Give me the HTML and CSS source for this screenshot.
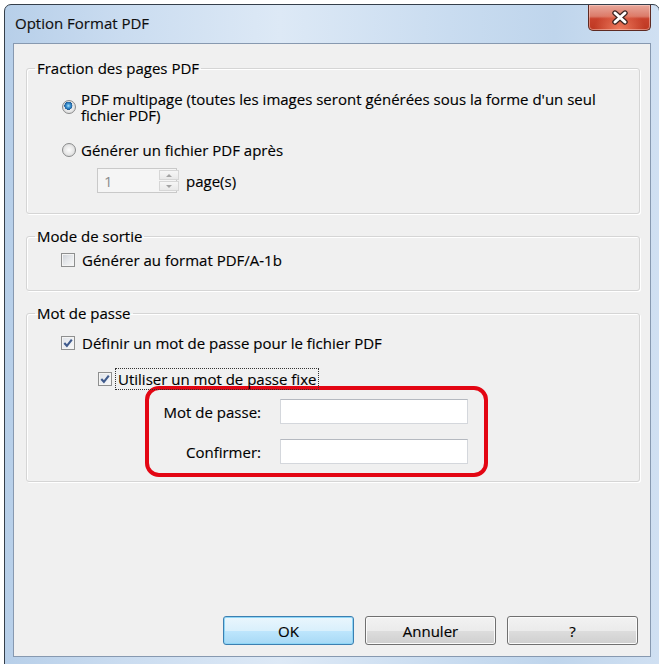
FILE: index.html
```html
<!DOCTYPE html>
<html lang="fr">
  <head>
    <meta charset="UTF-8" />
    <meta name="viewport" content="width=device-width, initial-scale=1.0" />
    <title>Option Format PDF</title>
    <link rel="stylesheet" href="styles.css">
  </head>
  <body>
    <div class="window">
      <div class="titlebar">
        <span class="title">Option Format PDF</span>
        <button type="button" class="close-btn" aria-label="Fermer">
          <svg width="18" height="15" viewBox="0 0 18 15">
            <path d="M4 3 L14 12 M14 3 L4 12" stroke="#3b2320" stroke-width="5.4" stroke-linecap="round" fill="none" />
            <path d="M4 3 L14 12 M14 3 L4 12" stroke="#fff" stroke-width="3" stroke-linecap="round" fill="none" />
          </svg>
        </button>
      </div>

      <div class="client">
        <fieldset class="group group-split">
          <legend>Fraction des pages PDF</legend>
          <div class="group-body">
            <label class="option option-multi">
              <input type="radio" class="radio" name="split" checked />
              <span class="option-text">PDF multipage (toutes les images seront générées sous la forme d'un seul fichier PDF)</span>
            </label>
            <label class="option option-after">
              <input type="radio" class="radio" name="split" />
              <span>Générer un fichier PDF après</span>
            </label>
            <div class="pages-row">
              <div class="spinner">
                <input type="text" class="spinner-input" value="1" disabled />
                <span class="spin-btns">
                  <span class="spin spin-up"></span>
                  <span class="spin spin-down"></span>
                </span>
              </div>
              <span>page(s)</span>
            </div>
          </div>
        </fieldset>

        <fieldset class="group group-mode">
          <legend>Mode de sortie</legend>
          <div class="group-body">
            <label class="option check-row">
              <span class="check"></span>
              <span>Générer au format PDF/A-1b</span>
            </label>
          </div>
        </fieldset>

        <fieldset class="group group-pass">
          <legend>Mot de passe</legend>
          <div class="group-body">
            <label class="option check-row">
              <span class="check checked">
                <svg width="12" height="12" viewBox="0 0 12 12"><path d="M2.3 6 L4.9 8.8 L9.8 2.6" stroke="#3f5a8c" stroke-width="2.1" fill="none" /></svg>
              </span>
              <span>Définir un mot de passe pour le fichier PDF</span>
            </label>
            <label class="option check-row check-fixed">
              <span class="check checked">
                <svg width="12" height="12" viewBox="0 0 12 12"><path d="M2.3 6 L4.9 8.8 L9.8 2.6" stroke="#3f5a8c" stroke-width="2.1" fill="none" /></svg>
              </span>
              <span class="focus-text">Utiliser un mot de passe fixe</span>
            </label>
            <div class="pass-box">
              <span class="pass-label">Mot de passe:</span>
              <input type="password" class="textbox" />
              <span class="pass-label">Confirmer:</span>
              <input type="password" class="textbox" />
            </div>
          </div>
        </fieldset>

        <div class="buttons">
          <button type="button" class="btn btn-default">OK</button>
          <button type="button" class="btn">Annuler</button>
          <button type="button" class="btn">?</button>
        </div>
      </div>
    </div>
  </body>
</html>
```

FILE: styles.css
```css
html,
body {
  margin: 0;
  background: #fff;
  overflow: hidden;
}
body {
  font-family: "Open Sans", "Noto Sans", sans-serif;
  font-size: 15px;
  line-height: 16px;
  color: #000;
  -webkit-text-stroke: 0.15px #000;
}
.window {
  box-sizing: border-box;
  width: 656px;
  height: 661px;
  margin: 4px 0 0 4px;
  padding: 0 8px 7px 8px;
  display: flex;
  flex-direction: column;
  border: 1px solid #353f4b;
  border-radius: 7px 7px 0 0;
  background: linear-gradient(to right, #b7cfe9 0%, #cadcf0 18%, #dde9f6 42%, #c9dcf0 68%, #bfd5ec 84%, #d0e0f2 100%);
}
.titlebar {
  height: 38px;
  display: flex;
  align-items: flex-start;
  flex-shrink: 0;
}
.title {
  margin: 10px 0 0 2px;
  font-size: 15px;
  color: #111;
}
.close-btn {
  margin-left: auto;
  width: 63px;
  height: 26px;
  padding: 0;
  display: flex;
  align-items: center;
  justify-content: center;
  border: 1px solid #5e2a22;
  border-top: none;
  border-radius: 0 0 5px 5px;
  background: radial-gradient(ellipse at 50% 100%, #ef7c5f 0%, rgba(239, 124, 95, 0) 60%),
    linear-gradient(#e9a89b 0%, #db7b6a 45%, #c9412c 55%, #bd3822 100%);
  box-shadow: inset 0 0 0 1px rgba(255, 220, 210, 0.45);
}
.client {
  flex: 1;
  display: flex;
  flex-direction: column;
  border: 1px solid #8799b0;
  background: #f0f0f0;
}
.group {
  margin: 0 10px 0 12px;
  padding: 0 10px 0 8px;
  border: 1px solid #d5d5d5;
  border-radius: 3px;
  box-shadow: inset 1px 1px 0 #fff, 1px 1px 0 #fff;
}
.group legend {
  padding: 0 2px;
  line-height: 16px;
}
.group-body {
  padding-left: 28px;
}
.group-split {
  margin-top: 16px;
  padding-top: 15px;
  padding-bottom: 20px;
}
.group-mode {
  margin-top: 14px;
  padding-top: 8px;
  padding-bottom: 22px;
}
.group-pass {
  margin-top: 14px;
  padding-top: 14px;
  padding-bottom: 4px;
}
.option {
  display: flex;
  align-items: center;
  gap: 5px;
  min-height: 16px;
}
.option-multi {
  min-height: 32px;
}
.option-text {
  max-width: 545px;
}
.option-after {
  margin-top: 19px;
}
.radio {
  appearance: none;
  flex-shrink: 0;
  width: 14px;
  height: 14px;
  margin: 0 0 0 -1px;
  border: 1px solid #8a8b8c;
  border-radius: 50%;
  background: radial-gradient(circle at 50% 50%, #fdfdfd 0%, #e6e6e6 55%, #c9c9c9 100%);
}
.radio:checked {
  background: radial-gradient(circle at 45% 40%, #a6e4fb 0px, #3f94d4 2px, #1c5b97 3.9px, rgba(28, 91, 151, 0) 4.2px),
    radial-gradient(circle at 50% 50%, #fdfdfd 0%, #e6e6e6 55%, #c9c9c9 100%);
}
.pages-row {
  margin: 10px 0 0 34px;
  display: flex;
  align-items: center;
  gap: 9px;
}
.spinner {
  box-sizing: border-box;
  width: 80px;
  height: 25px;
  display: flex;
  border: 1px solid #c9c9c9;
  background: #f5f5f5;
}
.spinner-input {
  width: 55px;
  padding: 0 0 0 6px;
  border: none;
  background: transparent;
  font: inherit;
  color: #8c8c8c;
  -webkit-text-stroke: 0;
}
.spin-btns {
  display: flex;
  flex-direction: column;
  gap: 1px;
  margin: 1px 1px 1px auto;
}
.spin {
  box-sizing: border-box;
  width: 20px;
  flex: 1;
  display: flex;
  align-items: center;
  justify-content: center;
  border: 1px solid #d6d6d6;
  background: linear-gradient(#f6f6f6, #e9e9e9);
}
.spin::after {
  content: "";
  border-left: 3px solid transparent;
  border-right: 3px solid transparent;
}
.spin-up::after {
  border-bottom: 3px solid #a3a3a3;
}
.spin-down::after {
  border-top: 3px solid #a3a3a3;
}
.check-row {
  gap: 7px;
  margin-left: -2px;
}
.check {
  box-sizing: border-box;
  flex-shrink: 0;
  width: 14px;
  height: 14px;
  display: flex;
  align-items: center;
  justify-content: center;
  border: 1px solid #8e8f8f;
  background: linear-gradient(135deg, #cbcfd5 0%, #e6e8eb 50%, #f8f8f8 100%);
  box-shadow: inset 0 0 0 1px #f4f4f4;
}
.check.checked {
  background: linear-gradient(135deg, #dfe3e9 0%, #eef0f3 60%, #fafafa 100%);
}
.check-fixed {
  margin: 20px 0 0 35px;
  gap: 6px;
}
.focus-text {
  outline: 1px dotted #333;
  outline-offset: 2px;
}
.pass-box {
  box-sizing: border-box;
  width: 343px;
  height: 91px;
  margin: -1px 0 0 82px;
  padding: 9px 16px 9px 0;
  display: grid;
  grid-template-columns: 112px 188px;
  grid-auto-rows: 25px;
  column-gap: 19px;
  row-gap: 15px;
  align-items: center;
  border: 4px solid #e30613;
  border-radius: 14px;
}
.pass-label {
  text-align: right;
}
.textbox {
  box-sizing: border-box;
  width: 188px;
  height: 25px;
  margin: 0;
  border: 1px solid #d4d7dc;
  border-top-color: #b5b9c0;
  background: #fff;
}
.buttons {
  margin-top: auto;
  padding: 0 12px 11px 0;
  display: flex;
  justify-content: flex-end;
  gap: 11px;
}
.btn {
  width: 131px;
  height: 29px;
  padding: 0;
  border: 1px solid #707070;
  border-radius: 3px;
  background: linear-gradient(#f2f2f2 0%, #ebebeb 50%, #dddddd 51%, #cfcfcf 100%);
  box-shadow: inset 0 0 0 1px #fbfbfb;
  font: inherit;
  color: #000;
}
.btn-default {
  border-color: #3c7fb1;
  background: linear-gradient(#eaf6fd 0%, #d9f0fc 50%, #bee6fd 51%, #a7d9f5 100%);
  box-shadow: inset 0 0 0 1px #8fd6f6;
}
```
